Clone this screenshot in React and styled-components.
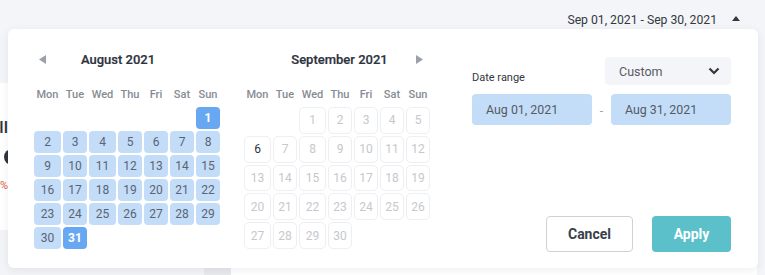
import styled, { createGlobalStyle } from 'styled-components'

const GlobalStyle = createGlobalStyle`
  body {
    margin: 0;
    background: #f4f5f9;
    font-family: Roboto, "Noto Sans", sans-serif;
  }
`

const WEEKDAYS = ['Mon', 'Tue', 'Wed', 'Thu', 'Fri', 'Sat', 'Sun']

const august = {
  title: 'August 2021',
  offset: 6,
  days: 31,
  arrow: 'prev',
}

const september = {
  title: 'September 2021',
  offset: 2,
  days: 30,
  arrow: 'next',
}

function buildRows(offset, days) {
  const cells = []
  for (let i = 0; i < offset; i++) cells.push(null)
  for (let d = 1; d <= days; d++) cells.push(d)
  return cells
}

function Arrow({ dir }) {
  return (
    <ArrowIcon width="7" height="9" viewBox="0 0 7 9" $dir={dir}>
      {dir === 'prev' ? (
        <polygon points="7,0 7,9 0,4.5" fill="#9aa0a6" />
      ) : (
        <polygon points="0,0 0,9 7,4.5" fill="#9aa0a6" />
      )}
    </ArrowIcon>
  )
}

function Month({ month, active }) {
  const cells = buildRows(month.offset, month.days)
  const rows = Math.ceil(cells.length / 7)
  return (
    <Calendar>
      <MonthHeader>
        <HeaderSlot>{month.arrow === 'prev' && <Arrow dir="prev" />}</HeaderSlot>
        <MonthTitle $dir={month.arrow}>{month.title}</MonthTitle>
        <HeaderSlot $right>{month.arrow === 'next' && <Arrow dir="next" />}</HeaderSlot>
      </MonthHeader>
      <DayGrid>
        {WEEKDAYS.map((w) => (
          <Weekday key={w}>{w}</Weekday>
        ))}
      </DayGrid>
      <DayGrid $rows={rows} $body>
        {cells.map((d, i) =>
          d === null ? (
            <span key={i} />
          ) : active ? (
            <InRange key={i} $edge={d === 1 || d === 31}>
              {d}
            </InRange>
          ) : (
            <Disabled key={i} $enabled={d === 6}>
              {d}
            </Disabled>
          )
        )}
      </DayGrid>
    </Calendar>
  )
}

export default function App() {
  return (
    <>
      <GlobalStyle />
      <Page>
        <TopBar>
          <RangeToggle>
            Sep 01, 2021 - Sep 30, 2021
            <svg width="8" height="5" viewBox="0 0 8 5">
              <polygon points="0,5 8,5 4,0" fill="#333840" />
            </svg>
          </RangeToggle>
        </TopBar>
        <Content>
          <LeftColumn>
            <StatCard>
              <ClipRight $size={17} $top={36}>
                Total Sell
              </ClipRight>
              <Avatar />
              <ClipRight $size={11} $top={15} $red>
                -2.2%
              </ClipRight>
            </StatCard>
          </LeftColumn>
          <Gutter />
          <MainCard />
        </Content>

        <Popup>
          <Month month={august} active />
          <Month month={september} />
          <Panel>
            <PanelTop>
              <Label>Date range</Label>
              <Select>
                Custom
                <svg width="12" height="8" viewBox="0 0 12 8">
                  <polyline
                    points="1.5,1.5 6,6 10.5,1.5"
                    fill="none"
                    stroke="#333840"
                    strokeWidth="2.2"
                  />
                </svg>
              </Select>
            </PanelTop>
            <Inputs>
              <DateInput>Aug 01, 2021</DateInput>
              <Dash>-</Dash>
              <DateInput>Aug 31, 2021</DateInput>
            </Inputs>
            <Actions>
              <CancelButton>Cancel</CancelButton>
              <ApplyButton>Apply</ApplyButton>
            </Actions>
          </Panel>
        </Popup>
      </Page>
    </>
  )
}

const Page = styled.div`
  position: relative;
  width: 765px;
  height: 275px;
  overflow: hidden;
  display: flex;
  flex-direction: column;
`
const TopBar = styled.div`
  height: 83px;
  display: flex;
  justify-content: flex-end;
  padding: 12px 25px 0 0;
  box-sizing: border-box;
`
const RangeToggle = styled.div`
  display: flex;
  align-items: center;
  gap: 15px;
  height: 16px;
  font-size: 12.2px;
  color: #333840;
  svg {
    margin-top: -3px;
  }
`
const Content = styled.div`
  flex: 1;
  display: flex;
`
const LeftColumn = styled.div`
  width: 204px;
  background: #f3f4f7;
`
const StatCard = styled.div`
  height: 147px;
  background: #fff;
  display: flex;
  flex-direction: column;
`
const ClipRight = styled.div`
  width: 8px;
  display: flex;
  justify-content: flex-end;
  white-space: nowrap;
  margin-top: ${(p) => p.$top}px;
  font-size: ${(p) => p.$size}px;
  line-height: 1;
  font-weight: ${(p) => (p.$red ? 400 : 500)};
  color: ${(p) => (p.$red ? '#e4583a' : '#2f343c')};
`
const Avatar = styled.div`
  width: 16px;
  height: 16px;
  border-radius: 50%;
  background: #2f343c;
  margin: 13px 0 0 4px;
`
const Gutter = styled.div`
  width: 27px;
  background: #e8e9ed;
`
const MainCard = styled.div`
  flex: 1;
  background: #fff;
  margin-right: 8px;
`

const Popup = styled.div`
  position: absolute;
  left: 8px;
  top: 29px;
  width: 750px;
  height: 239px;
  box-sizing: border-box;
  padding: 22px 27px 16px 26px;
  background: #fff;
  border-radius: 6px;
  box-shadow: 0 2px 8px rgba(30, 40, 60, 0.08);
  display: flex;
  gap: 24px;
`
const Calendar = styled.div`
  width: 186px;
  display: flex;
  flex-direction: column;
`
const MonthHeader = styled.div`
  display: grid;
  grid-template-columns: 20px 1fr 20px;
  align-items: center;
  height: 16px;
`
const HeaderSlot = styled.div`
  display: flex;
  justify-content: ${(p) => (p.$right ? 'flex-end' : 'flex-start')};
`
const ArrowIcon = styled.svg`
  display: block;
  margin: ${(p) => (p.$dir === 'prev' ? '0 0 0 5px' : '0 7px 0 0')};
`
const MonthTitle = styled.div`
  text-align: center;
  font-size: 13px;
  font-weight: 500;
  color: #2d333d;
  -webkit-text-stroke: 0.2px #2d333d;
  padding: ${(p) => (p.$dir === 'prev' ? '0 18px 0 0' : '0 0 0 5px')};
`
const DayGrid = styled.div`
  display: grid;
  grid-template-columns: 27px 24px 27px 24px 24px 24px 24px;
  column-gap: 2px;
  row-gap: 2px;
  margin-top: ${(p) => (p.$body ? '5px' : '21px')};
  ${(p) =>
    p.$body &&
    `
    height: 142px;
    grid-template-rows: repeat(${p.$rows}, 1fr);
  `}
`
const Weekday = styled.div`
  text-align: center;
  font-size: 11px;
  line-height: 14px;
  font-weight: 500;
  color: #868c94;
`
const DayCell = styled.div`
  display: flex;
  align-items: center;
  justify-content: center;
  font-size: 12px;
  border-radius: 4px;
  box-sizing: border-box;
`
const InRange = styled(DayCell)`
  background: ${(p) => (p.$edge ? '#68a7f1' : '#c3dcf8')};
  color: ${(p) => (p.$edge ? '#fff' : '#5b6472')};
  font-weight: ${(p) => (p.$edge ? 700 : 400)};
`
const Disabled = styled(DayCell)`
  border: 1px solid #eeeff2;
  border-radius: 5px;
  color: ${(p) => (p.$enabled ? '#2f343c' : '#c6c8cc')};
`

const Panel = styled.div`
  flex: 1;
  margin-left: 18px;
  padding-top: 6px;
  display: flex;
  flex-direction: column;
`
const PanelTop = styled.div`
  display: flex;
  justify-content: space-between;
`
const Label = styled.div`
  align-self: flex-end;
  font-size: 11px;
  line-height: 13px;
  margin-bottom: 1px;
  color: #333840;
`
const Select = styled.div`
  width: 126px;
  height: 28px;
  box-sizing: border-box;
  padding: 0 11px 0 14px;
  border-radius: 4px;
  background: #f4f5f8;
  display: flex;
  align-items: center;
  justify-content: space-between;
  font-size: 12.5px;
  color: #555b64;
`
const Inputs = styled.div`
  display: flex;
  justify-content: space-between;
  margin-top: 9px;
`
const DateInput = styled.div`
  width: 120px;
  height: 31px;
  box-sizing: border-box;
  padding-left: 14px;
  border-radius: 4px;
  background: #c3dcf8;
  display: flex;
  align-items: center;
  font-size: 12.4px;
  color: #555b64;
`
const Dash = styled.span`
  padding-top: 10px;
  font-size: 12px;
  line-height: 14px;
  color: #9aa0a6;
`
const Actions = styled.div`
  margin-top: auto;
  display: flex;
  justify-content: flex-end;
  gap: 19px;
`
const Button = styled.button`
  height: 36px;
  border-radius: 4px;
  font-family: inherit;
  font-size: 14px;
  font-weight: 700;
  cursor: pointer;
`
const CancelButton = styled(Button)`
  width: 87px;
  background: #fff;
  border: 1px solid #cfd1d5;
  color: #3a404b;
`
const ApplyButton = styled(Button)`
  width: 79px;
  background: #5bc0c9;
  border: none;
  color: #fff;
`
